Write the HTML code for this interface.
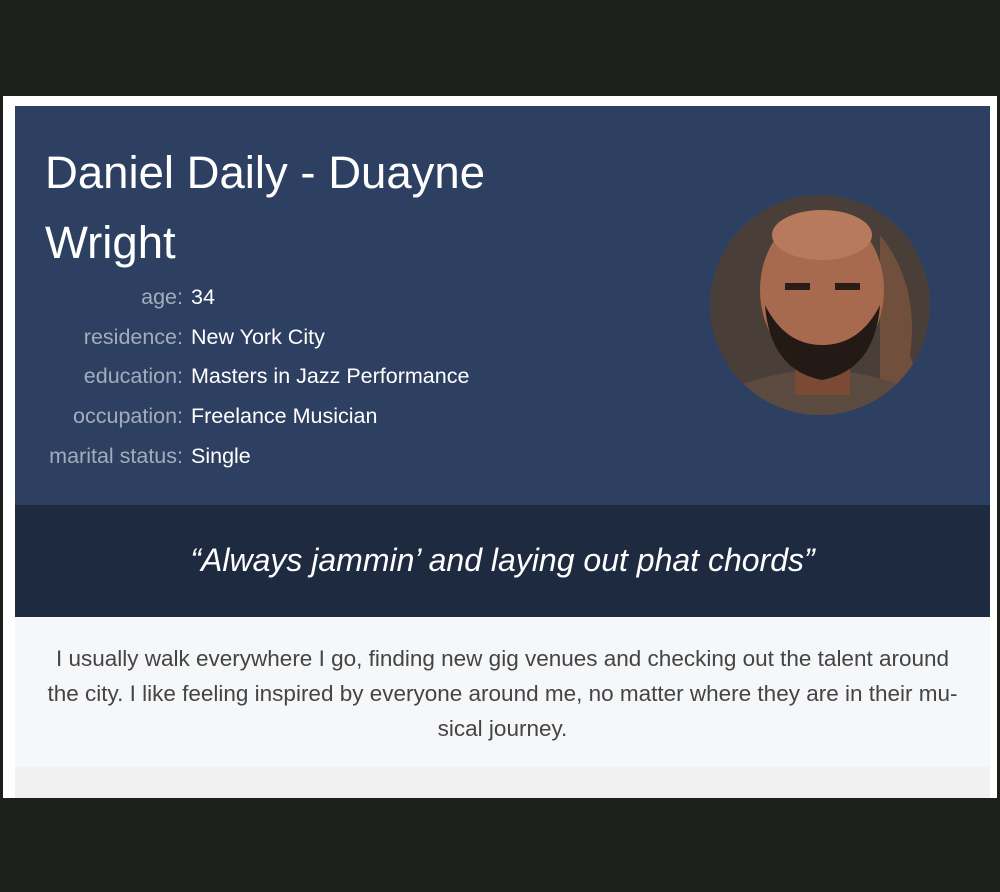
<!DOCTYPE html>
<html><head><style>
body{margin:0;width:1000px;height:892px;background:#1d1f1a;position:relative;font-family:"Liberation Sans",sans-serif;overflow:hidden}
.frame{position:absolute;left:3px;top:96px;width:994px;height:702px;background:#fff}
.hdr{position:absolute;left:15px;top:106px;width:975px;height:399px;background:#2e4061}
h1{position:absolute;left:30px;top:32px;margin:0;font-weight:normal;color:#fff;font-size:45.5px;line-height:70px;width:520px}
.rows{position:absolute;left:0;top:172px;font-size:21.5px;line-height:39.7px}
.r{display:flex}
.l{width:168px;text-align:right;color:#a3acbd;white-space:nowrap}
.v{color:#fff;margin-left:8px}
.photo{position:absolute;left:695px;top:89px;width:220px;height:220px;border-radius:50%;overflow:hidden}
.q{position:absolute;left:15px;top:505px;width:975px;height:112px;background:#1e2a3f;color:#fff;font-style:italic;font-size:32px;text-align:center;line-height:110px}
.p{position:absolute;left:15px;top:617px;width:975px;height:150px;background:#f6f7f9;color:#444;font-size:22.5px;line-height:35px;text-align:center;white-space:nowrap}
.p div{padding:24px 0 0}
.g{position:absolute;left:15px;top:767px;width:975px;height:31px;background:#f1f1f1}
</style></head><body>
<div class="frame"></div>
<div class="hdr">
<h1>Daniel Daily - Duayne Wright</h1>
<div class="rows">
<div class="r"><span class="l">age:</span><span class="v">34</span></div>
<div class="r"><span class="l">residence:</span><span class="v">New York City</span></div>
<div class="r"><span class="l">education:</span><span class="v">Masters in Jazz Performance</span></div>
<div class="r"><span class="l">occupation:</span><span class="v">Freelance Musician</span></div>
<div class="r"><span class="l">marital status:</span><span class="v">Single</span></div>
</div>
<div class="photo"><svg width="220" height="220">
<rect x="0" y="0" width="220" height="220" fill="#4a3f38"/>
<path d="M170 40 Q210 90 200 160 L220 220 L170 220Z" fill="#8a5a40" opacity=".6"/>
<path d="M30 190 Q110 160 190 190 L200 220 L20 220Z" fill="#5a4a40"/>
<rect x="85" y="140" width="55" height="60" fill="#7a4a35"/>
<ellipse cx="112" cy="95" rx="62" ry="78" fill="#a86a4e"/>
<ellipse cx="112" cy="40" rx="50" ry="25" fill="#b87a5c"/>
<path d="M55 110 Q60 175 112 185 Q165 175 170 110 Q150 150 112 150 Q75 150 55 110Z" fill="#231a16"/>
<rect x="75" y="88" width="25" height="7" fill="#2a1c16"/><rect x="125" y="88" width="25" height="7" fill="#2a1c16"/>
</svg></div>
</div>
<div class="q">“Always jammin’ and laying out phat chords”</div>
<div class="p"><div>I usually walk everywhere I go, finding new gig venues and checking out the talent around<br>the city. I like feeling inspired by everyone around me, no matter where they are in their mu-<br>sical journey.</div></div>
<div class="g"></div>
</body></html>
